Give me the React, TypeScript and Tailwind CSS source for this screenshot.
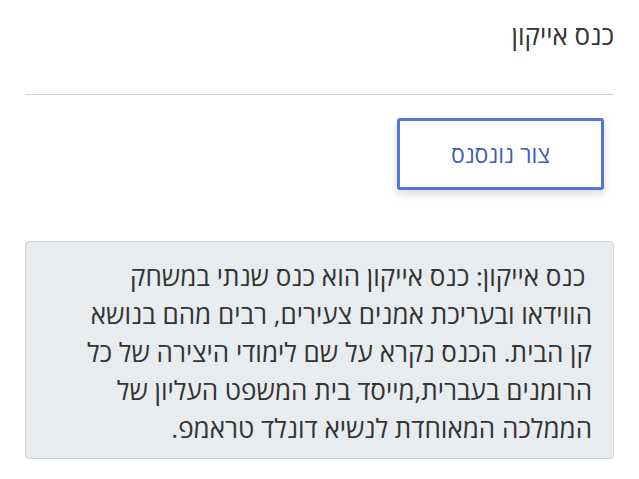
export default function App() {
  return (
    <div dir="rtl" className="min-h-[479px] bg-white text-[#333] font-['Open_Sans','DejaVu_Sans',sans-serif]">
      <div className="px-[25px] pt-[18px]">
        <h1 className="text-[26px] leading-[34px] font-normal">כנס אייקון</h1>
        <hr className="mt-[42px] border-t border-[#ccc]" />
        <div className="flex justify-start pr-[10px] pt-[23px]">
          <button
            type="button"
            className="h-[72px] w-[207px] rounded-[3px] border-[3px] border-[#5078d6] bg-white text-[23px] text-[#3d60b3] shadow-[0_4px_8px_rgba(0,0,0,0.15)]"
          >
            צור נונסנס
          </button>
        </div>
        <div className="mt-[51px] rounded-[4px] border border-[#cfd3d7] bg-[#e9ecef] px-[21px] pt-[15px] pb-[11px] text-[26px] leading-[38px]">
          &nbsp;כנס אייקון: כנס אייקון הוא כנס שנתי במשחק
          <br />
          הווידאו ובעריכת אמנים צעירים, רבים מהם בנושא
          <br />
          קן הבית. הכנס נקרא על שם לימודי היצירה של כל
          <br />
          הרומנים בעברית,מייסד בית המשפט העליון של
          <br />
          הממלכה המאוחדת לנשיא דונלד טראמפ.
        </div>
      </div>
    </div>
  );
}
